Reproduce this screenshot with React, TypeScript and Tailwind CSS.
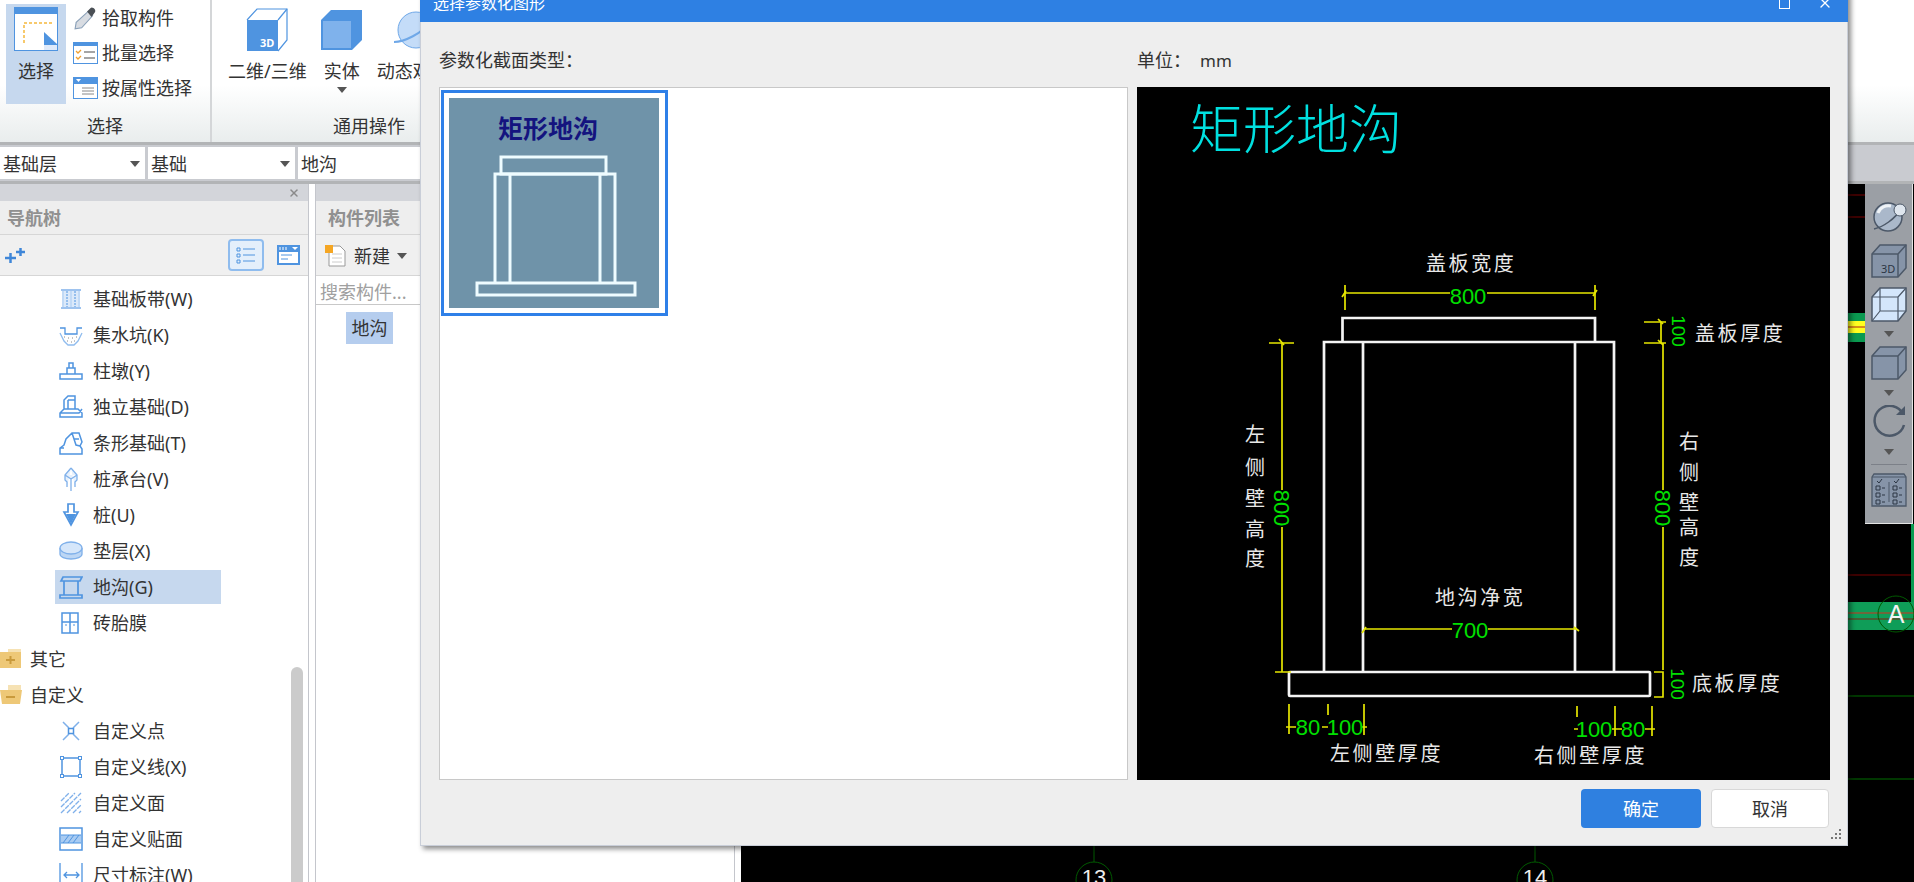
import type { ReactNode } from "react";
import { X } from "lucide-react";

const BLUE = "#4f94e0";

/* ---------- ribbon icons ---------- */
function SelectIcon() {
  return (
    <svg width="44" height="44" viewBox="0 0 44 44" className="block">
      <rect x="0.5" y="0.5" width="43" height="43" fill="#fff" stroke={BLUE} />
      <rect x="0" y="0" width="44" height="7" fill={BLUE} />
      <path d="M10 36V16H40" fill="none" stroke="#f5b83c" strokeWidth="1.5" strokeDasharray="3 2" />
      <path d="M30 25L43 37V43H30Z" fill={BLUE} />
      <path d="M30 38H43V43H30Z" fill="#dfeafa" />
    </svg>
  );
}

function PipetteIcon() {
  return (
    <svg width="24" height="24" viewBox="0 0 22 22">
      <path d="M1 21L2 15L13 5L17 9L7 20Z" fill="#d8dce2" stroke="#8aa0b8" />
      <path d="M12 5L15 2C17 0 21 4 19 6L16 10Z" fill="#4a4f55" />
    </svg>
  );
}

function BatchIcon() {
  return (
    <svg width="25" height="22" viewBox="0 0 25 22">
      <rect x="0.5" y="0.5" width="24" height="21" fill="#fff" stroke={BLUE} />
      <rect width="25" height="4" fill={BLUE} />
      <path d="M3 9l2 2 3-3M3 15l2 2 3-3" fill="none" stroke="#f0a030" strokeWidth="1.3" />
      <path d="M11 10H22M11 16H22" stroke="#888" strokeWidth="1.3" />
    </svg>
  );
}

function AttrIcon() {
  return (
    <svg width="25" height="22" viewBox="0 0 25 22">
      <rect x="0.5" y="0.5" width="24" height="21" fill="#fff" stroke={BLUE} />
      <rect width="25" height="7" fill={BLUE} />
      <path d="M3 2H8L5.500 5Z" fill="#fff" />
      <path d="M9 11H21M9 14H21M9 17H21" stroke="#888" />
    </svg>
  );
}

function Cube3D() {
  return (
    <svg width="44" height="44" viewBox="0 0 44 44">
      <path d="M2 12L12 1H42V32L33 43" fill="#fff" stroke={BLUE} strokeWidth="1.2" />
      <path d="M33 12L42 1" stroke={BLUE} strokeWidth="1.2" />
      <rect x="2" y="12" width="31" height="31" fill={BLUE} />
      <text x="15" y="39" fontSize="11" fontWeight="700" fill="#fff">3D</text>
    </svg>
  );
}

function SolidCube() {
  return (
    <svg width="42" height="42" viewBox="0 0 42 42">
      <path d="M0 11L10 1H41V31L31 41H0Z" fill={BLUE} />
      <rect x="2" y="12" width="28" height="27" fill="#7fb2ec" />
    </svg>
  );
}

function OrbitIcon() {
  return (
    <svg width="44" height="44" viewBox="0 0 44 44">
      <circle cx="25" cy="22" r="18" fill="#c4dcf8" stroke="#6fa8e8" />
      <path d="M3 34C12 34 32 26 40 12" fill="none" stroke="#6fa8e8" strokeWidth="2" />
      <circle cx="36" cy="12" r="5" fill="#eaf3fd" stroke="#6fa8e8" />
    </svg>
  );
}

/* ---------- nav tree icons ---------- */
const treeIcons: Record<string, ReactNode> = {
  band: (
    <>
      <path d="M2 3H22M2 21H22" stroke="#7fb0ea" strokeWidth="1.5" />
      <rect x="3" y="4" width="18" height="16" fill="#dbe9fa" />
      <path d="M8 4V20M16 4V20" stroke={BLUE} strokeDasharray="2 1" />
      <path d="M12 4V20M4 4V20M20 4V20" stroke="#a8cbf2" />
    </>
  ),
  pit: (
    <>
      <path d="M1 5H6V11H18V5H23" fill="none" stroke={BLUE} strokeWidth="1.3" />
      <path d="M1 10L5 18L9 22H15L19 18L23 10" fill="none" stroke="#8fbcee" strokeWidth="1.3" />
      <path d="M5 14h1M9 15h1M13 15h1M17 14h1M8 18h1M12 19h1M15 18h1" stroke="#888" />
    </>
  ),
  cap: <path d="M8 9H16V15H8ZM10 9V4H14V9M1 15H23V20H1Z" fill="#fff" stroke={BLUE} strokeWidth="1.5" />,
  isolated: (
    <path d="M5 14V5L9 1H16V14M9 5H16M9 5V14M1 18L5 14H19L23 18V22H1ZM1 18H20L23 14" fill="#fff" stroke={BLUE} strokeWidth="1.5" />
  ),
  strip: (
    <path d="M1 23V17L5 14L7 8L13 2H20L23 11L21 15L23 18V23ZM1 17H5M13 2L15 8H20M15 8L17 14L21 15" fill="#fff" stroke={BLUE} strokeWidth="1.5" />
  ),
  capPile: (
    <path d="M12 1L18 8V13L16 15V20M12 1L6 8V13L8 15V20M6 8L12 12L18 8M12 12V24" fill="#e6f0fc" stroke="#7fb0ea" strokeWidth="1.3" />
  ),
  pile: (
    <>
      <path d="M9 1H15V9H19L12 22L5 9H9Z" fill="#fff" stroke={BLUE} strokeWidth="1.7" />
      <path d="M7 11H17L12 21Z" fill={BLUE} />
    </>
  ),
  cushion: (
    <>
      <path d="M1 9V15C1 18 6 20 12 20S23 18 23 15V9" fill="#bcd6f4" stroke="#7fb0ea" strokeWidth="1.3" />
      <ellipse cx="12" cy="9" rx="11" ry="6" fill="#d5e6fa" stroke="#7fb0ea" strokeWidth="1.3" />
    </>
  ),
  trench: (
    <path d="M4 2H23L21 6H2ZM5 6V20M19 6V20M1 20H23V23H1Z" fill="none" stroke={BLUE} strokeWidth="1.7" />
  ),
  film: (
    <>
      <rect x="3" y="2" width="16" height="20" fill="#fff" stroke={BLUE} strokeWidth="1.5" />
      <path d="M11 2V22M3 11H19" stroke={BLUE} strokeWidth="1.5" />
      <path d="M7 13v2M15 13v2" stroke={BLUE} />
    </>
  ),
  point: (
    <>
      <path d="M4 3L10 9M20 3L14 9M4 21L10 15M20 21L14 15" stroke="#7fb0ea" strokeWidth="1.5" />
      <rect x="9.500" y="9.500" width="5" height="5" fill="#fff" stroke={BLUE} strokeWidth="1.5" />
    </>
  ),
  line: (
    <>
      <rect x="3" y="3" width="18" height="18" fill="none" stroke={BLUE} strokeWidth="1.5" />
      {[[3, 3], [21, 3], [3, 21], [21, 21]].map(([x, y]) => (
        <rect key={`${x}-${y}`} x={x - 1.5} y={y - 1.5} width="3" height="3" fill="#fff" stroke={BLUE} />
      ))}
    </>
  ),
  area: (
    <path d="M2 10L10 2M2 16L16 2M2 22L22 2M8 22L22 8M14 22L22 14M20 22L22 20" stroke="#7fb0ea" strokeWidth="1.3" strokeDasharray="5 1" />
  ),
  patch: (
    <>
      <rect x="1" y="1" width="22" height="22" fill="#fff" stroke={BLUE} strokeWidth="1.5" />
      <rect x="2" y="8" width="20" height="8" fill="#a8cbf2" />
      <path d="M2 8H22M2 16H22M4 16L10 8M9 16L15 8M14 16L20 8" stroke={BLUE} />
    </>
  ),
  dim: (
    <path d="M1 0V24M23 0V24M5 12H20M8 9L5 12L8 15M17 9L20 12L17 15" fill="none" stroke={BLUE} strokeWidth="1.3" />
  ),
};

function TreeRow({ icon, label, active }: { icon: string; label: string; active?: boolean }) {
  return (
    <div className="flex h-9 items-center pl-[55px]">
      <div className={`flex h-[34px] w-[166px] items-center gap-[10px] pl-1 ${active ? "bg-[#c6d8ee]" : ""}`}>
        <svg width="24" height="24" viewBox="0 0 24 24" className="shrink-0">
          {treeIcons[icon]}
        </svg>
        <span className="whitespace-nowrap">{label}</span>
      </div>
    </div>
  );
}

function FolderRow({ label, open }: { label: string; open?: boolean }) {
  return (
    <div className="flex h-9 items-center gap-[8px]">
      <svg width="22" height="20" viewBox="0 0 22 20" className="shrink-0">
        <path d="M8 0H21V6H8Z" fill="#f6e2b4" />
        <path d={open ? "M0 5H22L20 19H2Z" : "M0 3H21V19H0Z"} fill="#eec877" />
        <path d={open ? "M6 12H15" : "M6 11H15M10.500 7V15"} stroke="#c99a3c" strokeWidth="2" />
      </svg>
      <span>{label}</span>
    </div>
  );
}

/* ---------- preview drawing, in page coordinates ---------- */
function CadLabel({ x, y, children }: { x: number; y: number; children: string }) {
  return (
    <text x={x} y={y} fontSize="20" letterSpacing="2.6" fill="#e8e8e8" dominantBaseline="central">
      {children}
    </text>
  );
}

function Dim({ x, y, children, rotate, size = 22 }: { x: number; y: number; children: string; rotate?: boolean; size?: number }) {
  return (
    <text
      x={x}
      y={y}
      fontSize={size}
      fontFamily="Liberation Sans"
      fill="#00e000"
      textAnchor="middle"
      dominantBaseline="central"
      transform={rotate ? `rotate(90 ${x} ${y})` : undefined}
    >
      {children}
    </text>
  );
}

function Column({ x, chars }: { x: number; chars: [string, number][] }) {
  return (
    <>
      {chars.map(([c, y]) => (
        <text key={c} x={x} y={y} fontSize="20" fill="#e8e8e8" textAnchor="middle" dominantBaseline="central">
          {c}
        </text>
      ))}
    </>
  );
}

function TrenchDrawing() {
  return (
    <svg viewBox="1137 87 693 693" className="block h-full w-full">
      <text x="1190" y="128" fontSize="53" fill="#00e0e0" dominantBaseline="central" fontWeight="300">矩形地沟</text>

      <g fill="none" stroke="#f4f4f4" strokeWidth="2.700">
        <path d="M1342.500 342V318H1595V342" />
        <path d="M1324 672V342H1614V672" />
        <path d="M1363 342V672M1575 342V672" />
        <rect x="1289" y="672" width="361" height="24" rx="1" />
      </g>

      <g fill="none" stroke="#e6e600" strokeWidth="1.700">
        <path d="M1345 293H1450M1487 293H1595M1345 285V310M1595 285V310" />
        <path d="M1269 343H1294M1282 343V490M1282 527V672M1275 672H1291" />
        <path d="M1644 322H1666M1644 343H1666M1661 322V343M1663 343V490M1663 527V670" />
        <path d="M1654 672H1663V697H1654" />
        <path d="M1364 629H1452M1488 629H1577" />
        <path d="M1289 704V734M1328 704V715M1364 704V735M1577 706V717M1615 706V736M1652 706V736" />
        <path d="M1286 727H1296M1322 727H1328M1362 727H1367M1574 729H1578M1612 729H1622M1645 729H1655" />
        <path d="M1342 297l4-6M1593 296l4-6M1279 339l5 6M1658 319l5 5M1658 340l5 5M1362 633l4-6M1574 627l5 4" />
      </g>

      <CadLabel x={1426} y={263}>盖板宽度</CadLabel>
      <CadLabel x={1695} y={333}>盖板厚度</CadLabel>
      <CadLabel x={1692} y={683}>底板厚度</CadLabel>
      <CadLabel x={1435} y={597}>地沟净宽</CadLabel>
      <CadLabel x={1330} y={753}>左侧壁厚度</CadLabel>
      <CadLabel x={1534} y={755}>右侧壁厚度</CadLabel>
      <Column x={1255} chars={[["左", 434], ["侧", 467], ["壁", 498], ["高", 529], ["度", 558]]} />
      <Column x={1689} chars={[["右", 441], ["侧", 472], ["壁", 502], ["高", 527], ["度", 557]]} />

      <Dim x={1468} y={296}>800</Dim>
      <Dim x={1470} y={630}>700</Dim>
      <Dim x={1281} y={508} rotate>800</Dim>
      <Dim x={1662} y={508} rotate>800</Dim>
      <Dim x={1678} y={331} rotate size={19}>100</Dim>
      <Dim x={1677} y={684} rotate size={19}>100</Dim>
      <Dim x={1308} y={727}>80</Dim>
      <Dim x={1345} y={727}>100</Dim>
      <Dim x={1594} y={729}>100</Dim>
      <Dim x={1633} y={729}>80</Dim>
    </svg>
  );
}

function Thumbnail() {
  return (
    <svg width="210" height="210" viewBox="0 0 210 210" className="block bg-[#6f93a9]">
      <text x="99" y="30" fontSize="25" fontWeight="700" fill="#14147f" textAnchor="middle" dominantBaseline="central">
        矩形地沟
      </text>
      <g fill="none" stroke="#eefcff" strokeWidth="3">
        <rect x="52" y="59" width="105" height="17" />
        <path d="M46 185V76H166V185M61 76V185M151 76V185" />
        <rect x="28" y="185" width="158" height="12" />
      </g>
    </svg>
  );
}

/* ---------- floating view toolbar ---------- */
const TB = "#4c5868";

function Caret({ color = "#555" }: { color?: string }) {
  return (
    <svg width="10" height="6" viewBox="0 0 10 6" className="shrink-0">
      <path d="M0 0H10L5 6Z" fill={color} />
    </svg>
  );
}

function ViewToolbar() {
  return (
    <div className="absolute top-0 right-px flex h-[340px] w-[48px] flex-col items-center border-r border-b border-[#e4e4e4] bg-[#9b9fa5] pt-[17px]">
      <svg width="36" height="32" viewBox="0 0 36 32">
        <circle cx="17" cy="16" r="14" fill="#aab8ca" stroke={TB} strokeWidth="1.5" />
        <path d="M3 28C12 26 24 18 30 8" fill="none" stroke={TB} strokeWidth="1.5" />
        <circle cx="29" cy="9" r="6" fill="#dfe6ee" stroke={TB} />
        <path d="M7 12C9 6 15 4 20 5" fill="none" stroke="#eef2f6" strokeWidth="3" />
      </svg>
      <svg width="36" height="34" viewBox="0 0 36 34" className="mt-[11px]">
        <path d="M1 10L9 1H35V24L27 33H1Z" fill="#8694a8" stroke={TB} strokeWidth="1.5" />
        <path d="M1 10H27V33M27 10L35 1" fill="none" stroke={TB} strokeWidth="1.5" />
        <text x="10" y="29" fontSize="11" fill="#2c3644">3D</text>
      </svg>
      <svg width="36" height="35" viewBox="0 0 36 35" className="mt-[9px]">
        <path d="M1 10L9 1H35V24L27 34H1Z" fill="#d4e6fb" stroke={TB} strokeWidth="1.5" />
        <path d="M1 10H27V34M27 10L35 1M9 1V24H35M1 34L9 24" fill="none" stroke={TB} strokeWidth="1.2" />
      </svg>
      <div className="mt-[9px]"><Caret /></div>
      <svg width="36" height="34" viewBox="0 0 36 34" className="mt-[9px]">
        <path d="M1 10L9 1H35V24L27 33H1Z" fill="#8694a8" stroke={TB} strokeWidth="1.5" />
        <path d="M1 10H27V33M27 10L35 1" fill="none" stroke={TB} strokeWidth="1.5" />
      </svg>
      <div className="mt-[10px]"><Caret /></div>
      <svg width="36" height="33" viewBox="0 0 36 33" className="mt-[9px]">
        <path d="M32 9A15 15 0 1 0 33 20" fill="none" stroke={TB} strokeWidth="2.500" />
        <path d="M25 10H34V1Z" fill={TB} />
      </svg>
      <div className="mt-[11px]"><Caret /></div>
      <div className="mt-[9px] h-px w-[36px] bg-[#7c8088]" />
      <svg width="36" height="34" viewBox="0 0 36 34" className="mt-[8px]">
        <path d="M1 4L3 1H33L35 4V33H1Z" fill="#8694a8" stroke={TB} strokeWidth="1.3" />
        <path d="M1 4H35M18 9V29" stroke={TB} />
        <path d="M5 13h4v4h-4zM5 20h4v4h-4zM5 27h4v4h-4zM22 13h4v4h-4zM22 20h4v4h-4zM22 27h4v4h-4z" fill="none" stroke="#2c3644" />
        <path d="M11 15h3M11 22h3M11 29h3M28 15h3M28 22h3M28 29h3M6 8l2 2 3-4M23 8l2 2 3-4" fill="none" stroke="#2c3644" />
      </svg>
    </div>
  );
}

function Bubble({ x, label }: { x: number; label: string }) {
  return (
    <g>
      <path d={`M${x} 846V862`} stroke="#005a00" />
      <circle cx={x} cy="880" r="18" fill="none" stroke="#005a00" />
      <text x={x} y="885" fontSize="22" fontFamily="Liberation Sans" fill="#eee" textAnchor="middle">{label}</text>
    </g>
  );
}

function CanvasDrawing() {
  return (
    <svg viewBox="741 184 1173 698" className="block h-full w-full">
      <path d="M1848 195H1866M1848 217H1866" stroke="#7a0000" />
      <rect x="1848" y="313" width="18" height="29" fill="#0a9a50" />
      <rect x="1848" y="321" width="18" height="12" fill="#ffff20" />
      <path d="M1848 327H1866" stroke="#b02010" />
      <path d="M1848 575H1914" stroke="#7a0000" />
      <rect x="1911" y="524" width="3" height="78" fill="#0a9a50" />
      <rect x="1848" y="602" width="66" height="28" fill="#0f9d58" />
      <path d="M1848 613H1914" stroke="#d03020" />
      <path d="M1848 619H1914" stroke="#7a2010" />
      <path d="M1848 696H1914M1848 779H1914" stroke="#006e00" />
      <circle cx="1896" cy="614" r="18" fill="none" stroke="#005a00" />
      <text x="1896" y="623" fontSize="25" fontFamily="Liberation Sans" fill="#f4f4f4" textAnchor="middle">A</text>
      <Bubble x={1094} label="13" />
      <Bubble x={1535} label="14" />
    </svg>
  );
}

/* ---------- dialog ---------- */
function ParamDialog() {
  return (
    <div className="absolute top-[-16px] left-[420px] flex h-[862px] w-[1428px] flex-col border-x border-b border-[#c9ced8] bg-[#eeeeee] shadow-[3px_3px_5px_rgba(0,0,0,0.45)]">
      <div className="-mx-px flex h-[38px] shrink-0 items-center justify-between bg-[#2e80e3] pr-[15px] pl-[13px] text-white">
        <span className="text-[16px]">选择参数化图形</span>
        <div className="flex items-center gap-[27px]">
          <div className="h-[11px] w-[11px] border border-white" />
          <X size={16} strokeWidth={2} />
        </div>
      </div>
      <div className="grid h-[65px] shrink-0 grid-cols-[689px_693px] items-center gap-[9px] pt-[11px] pl-[18px]">
        <span>参数化截面类型：</span>
        <span className="flex items-center gap-[9px]">
          <span>单位：</span>
          <span className="text-[17px]">mm</span>
        </span>
      </div>
      <div className="grid h-[693px] shrink-0 grid-cols-[689px_693px] gap-[9px] pl-[18px]">
        <div className="border border-[#c8c8c8] bg-white px-px pt-[2px]">
          <div className="w-[227px] border-[3px] border-[#2f80e8] bg-white p-[5px]">
            <Thumbnail />
          </div>
        </div>
        <div className="bg-black">
          <TrenchDrawing />
        </div>
      </div>
      <div className="mt-[9px] flex justify-end gap-[10px] pr-[18px]">
        <button className="h-[39px] w-[120px] rounded bg-[#2f80e0] text-white">确定</button>
        <button className="h-[39px] w-[118px] rounded border border-[#d8d8d8] bg-white">取消</button>
      </div>
      <svg width="12" height="12" viewBox="0 0 12 12" className="absolute right-[5px] bottom-[5px]">
        <path d="M9 1h2v2h-2zM5 5h2v2h-2zM9 5h2v2h-2zM1 9h2v2h-2zM5 9h2v2h-2zM9 9h2v2h-2z" fill="#777" />
      </svg>
    </div>
  );
}

/* ---------- app shell ---------- */
function SmallTool({ icon, label }: { icon: ReactNode; label: string }) {
  return (
    <div className="flex h-[35px] items-center gap-[4px] whitespace-nowrap">
      <div className="flex w-[25px] justify-center">{icon}</div>
      <span>{label}</span>
    </div>
  );
}

function BigTool({ icon, label, caret }: { icon: ReactNode; label: string; caret?: boolean }) {
  return (
    <div className="flex flex-col items-center whitespace-nowrap">
      <div className="flex h-[56px] items-center">{icon}</div>
      <span className="leading-[26px]">{label}</span>
      {caret && <div className="mt-[3px]"><Caret /></div>}
    </div>
  );
}

function Combo({ label, width, caret = true }: { label: string; width: string; caret?: boolean }) {
  return (
    <div className={`flex h-[32px] items-center justify-between bg-white pt-[2px] pr-[5px] pl-[3px] ${width}`}>
      <span>{label}</span>
      {caret && <Caret />}
    </div>
  );
}

export default function App() {
  return (
    <div className="relative flex h-[882px] w-[1914px] flex-col overflow-hidden bg-white font-['Noto_Sans','Noto_Sans_CJK_SC',sans-serif] text-[18px] leading-none text-[#333]">
      {/* ribbon */}
      <div className="flex h-[142px] shrink-0 bg-gradient-to-b from-white from-60% to-[#e9eded]">
        <div className="flex w-[212px] shrink-0 flex-col border-r-2 border-[#d4d6d8]">
          <div className="flex pt-1 pl-[6px]">
            <div className="flex h-[100px] w-[60px] flex-col items-center bg-[#c6d8ee] pt-[3px]">
              <SelectIcon />
              <span className="mt-[11px]">选择</span>
            </div>
            <div className="-mt-[4px] ml-[7px] flex flex-col">
              <SmallTool icon={<PipetteIcon />} label="拾取构件" />
              <SmallTool icon={<BatchIcon />} label="批量选择" />
              <SmallTool icon={<AttrIcon />} label="按属性选择" />
            </div>
          </div>
          <div className="mt-[12px] text-center">选择</div>
        </div>
        <div className="flex w-[330px] shrink-0 flex-col pl-[16px]">
          <div className="flex gap-[14px] pt-[2px]">
            <BigTool icon={<Cube3D />} label="二维/三维" />
            <BigTool icon={<SolidCube />} label="实体" caret />
            <BigTool icon={<OrbitIcon />} label="动态观察" />
          </div>
          <div className="absolute top-[117px] left-[333px]">通用操作</div>
        </div>
      </div>

      {/* floor / type combos */}
      <div className="flex h-[42px] shrink-0 items-center gap-[3px] border-y-[3px] border-[#b2b4b6] bg-[#c9cbd0]">
        <Combo label="基础层" width="w-[145px]" />
        <Combo label="基础" width="w-[147px]" />
        <Combo label="地沟" width="w-[200px]" caret={false} />
      </div>

      {/* body */}
      <div className="flex min-h-0 flex-1">
        {/* nav tree */}
        <div className="flex w-[309px] shrink-0 flex-col border-r border-[#c4c6cc]">
          <div className="flex h-[17px] shrink-0 items-center justify-end bg-[#d3d5da] pr-[8px]">
            <X size={12} strokeWidth={3} className="text-[#8a8a8a]" />
          </div>
          <div className="flex h-[34px] shrink-0 items-center border-b border-[#d6d6d6] bg-[#eeeeee] pl-[7px] font-bold text-[#909090]">
            导航树
          </div>
          <div className="flex h-[41px] shrink-0 items-center border-b border-[#d6d6d6] bg-[#f0f0f0] pl-[5px]">
            <svg width="20" height="16" viewBox="0 0 20 16" className="text-[#3f86d8]">
              <path d="M0 11h11M5.500 6v10" stroke="currentColor" strokeWidth="2.500" />
              <path d="M11 5h9M15.500 1v8" stroke="currentColor" strokeWidth="2.500" />
            </svg>
            <div className="ml-[203px] flex h-[32px] w-[36px] items-center justify-center rounded-[4px] border-2 border-[#8fbcee] bg-[#e4effb]">
              <svg width="20" height="18" viewBox="0 0 20 18">
                <path d="M1 2h3v3h-3zM1 8h3v3h-3zM1 14h3v3h-3z" fill="none" stroke={BLUE} />
                <path d="M7 3H19M7 9H19M7 15H19" stroke={BLUE} />
              </svg>
            </div>
            <svg width="23" height="20" viewBox="0 0 23 20" className="ml-[13px]">
              <rect width="23" height="20" fill={BLUE} />
              <rect x="2" y="7" width="19" height="11" fill="#fff" />
              <path d="M3 2v3M6 2v3M9 2v3" stroke="#fff" />
              <path d="M15 2H21L18 5Z" fill="#fff" />
              <path d="M4 10H15M4 14H11" stroke={BLUE} />
            </svg>
          </div>
          <div className="flex min-h-0 flex-1 bg-white">
            <div className="min-w-0 flex-1 overflow-hidden pt-[5px]">
              <TreeRow icon="band" label="基础板带(W)" />
              <TreeRow icon="pit" label="集水坑(K)" />
              <TreeRow icon="cap" label="柱墩(Y)" />
              <TreeRow icon="isolated" label="独立基础(D)" />
              <TreeRow icon="strip" label="条形基础(T)" />
              <TreeRow icon="capPile" label="桩承台(V)" />
              <TreeRow icon="pile" label="桩(U)" />
              <TreeRow icon="cushion" label="垫层(X)" />
              <TreeRow icon="trench" label="地沟(G)" active />
              <TreeRow icon="film" label="砖胎膜" />
              <FolderRow label="其它" />
              <FolderRow label="自定义" open />
              <TreeRow icon="point" label="自定义点" />
              <TreeRow icon="line" label="自定义线(X)" />
              <TreeRow icon="area" label="自定义面" />
              <TreeRow icon="patch" label="自定义贴面" />
              <TreeRow icon="dim" label="尺寸标注(W)" />
            </div>
            <div className="mr-[5px] w-[12px] shrink-0 pt-[391px]">
              <div className="h-full rounded-t-full bg-[#cbcbcb]" />
            </div>
          </div>
        </div>

        {/* component list */}
        <div className="ml-[6px] flex w-[420px] shrink-0 flex-col border-x border-[#c4c6cc]">
          <div className="h-[17px] shrink-0 bg-[#d3d5da]" />
          <div className="flex h-[34px] shrink-0 items-center border-b border-[#d6d6d6] bg-[#eeeeee] pl-[12px] font-bold text-[#909090]">
            构件列表
          </div>
          <div className="flex h-[41px] shrink-0 items-center gap-[7px] border-b border-[#d6d6d6] bg-[#f0f0f0] pt-[2px] pl-[9px]">
            <svg width="22" height="22" viewBox="0 0 22 22">
              <path d="M4 1H15L20 6V21H4Z" fill="#fff" stroke="#999" />
              <path d="M7 9H17M7 13H17M7 17H17" stroke="#ccc" />
              <rect x="0" y="0" width="8" height="8" fill="#f5a623" />
            </svg>
            <span>新建</span>
            <Caret />
          </div>
          <div className="flex h-[29px] shrink-0 items-center border-b border-[#c8c8c8] pt-[3px] pl-[4px] text-[#a0a0a0]">
            搜索构件...
          </div>
          <div className="pt-[7px] pl-[30px]">
            <div className="flex h-[32px] w-[47px] items-center justify-center bg-[#b5cdee]">地沟</div>
          </div>
        </div>

        {/* canvas */}
        <div className="relative ml-[6px] min-w-0 flex-1 bg-black">
          <CanvasDrawing />
          <ViewToolbar />
        </div>
      </div>

      <ParamDialog />
    </div>
  );
}
